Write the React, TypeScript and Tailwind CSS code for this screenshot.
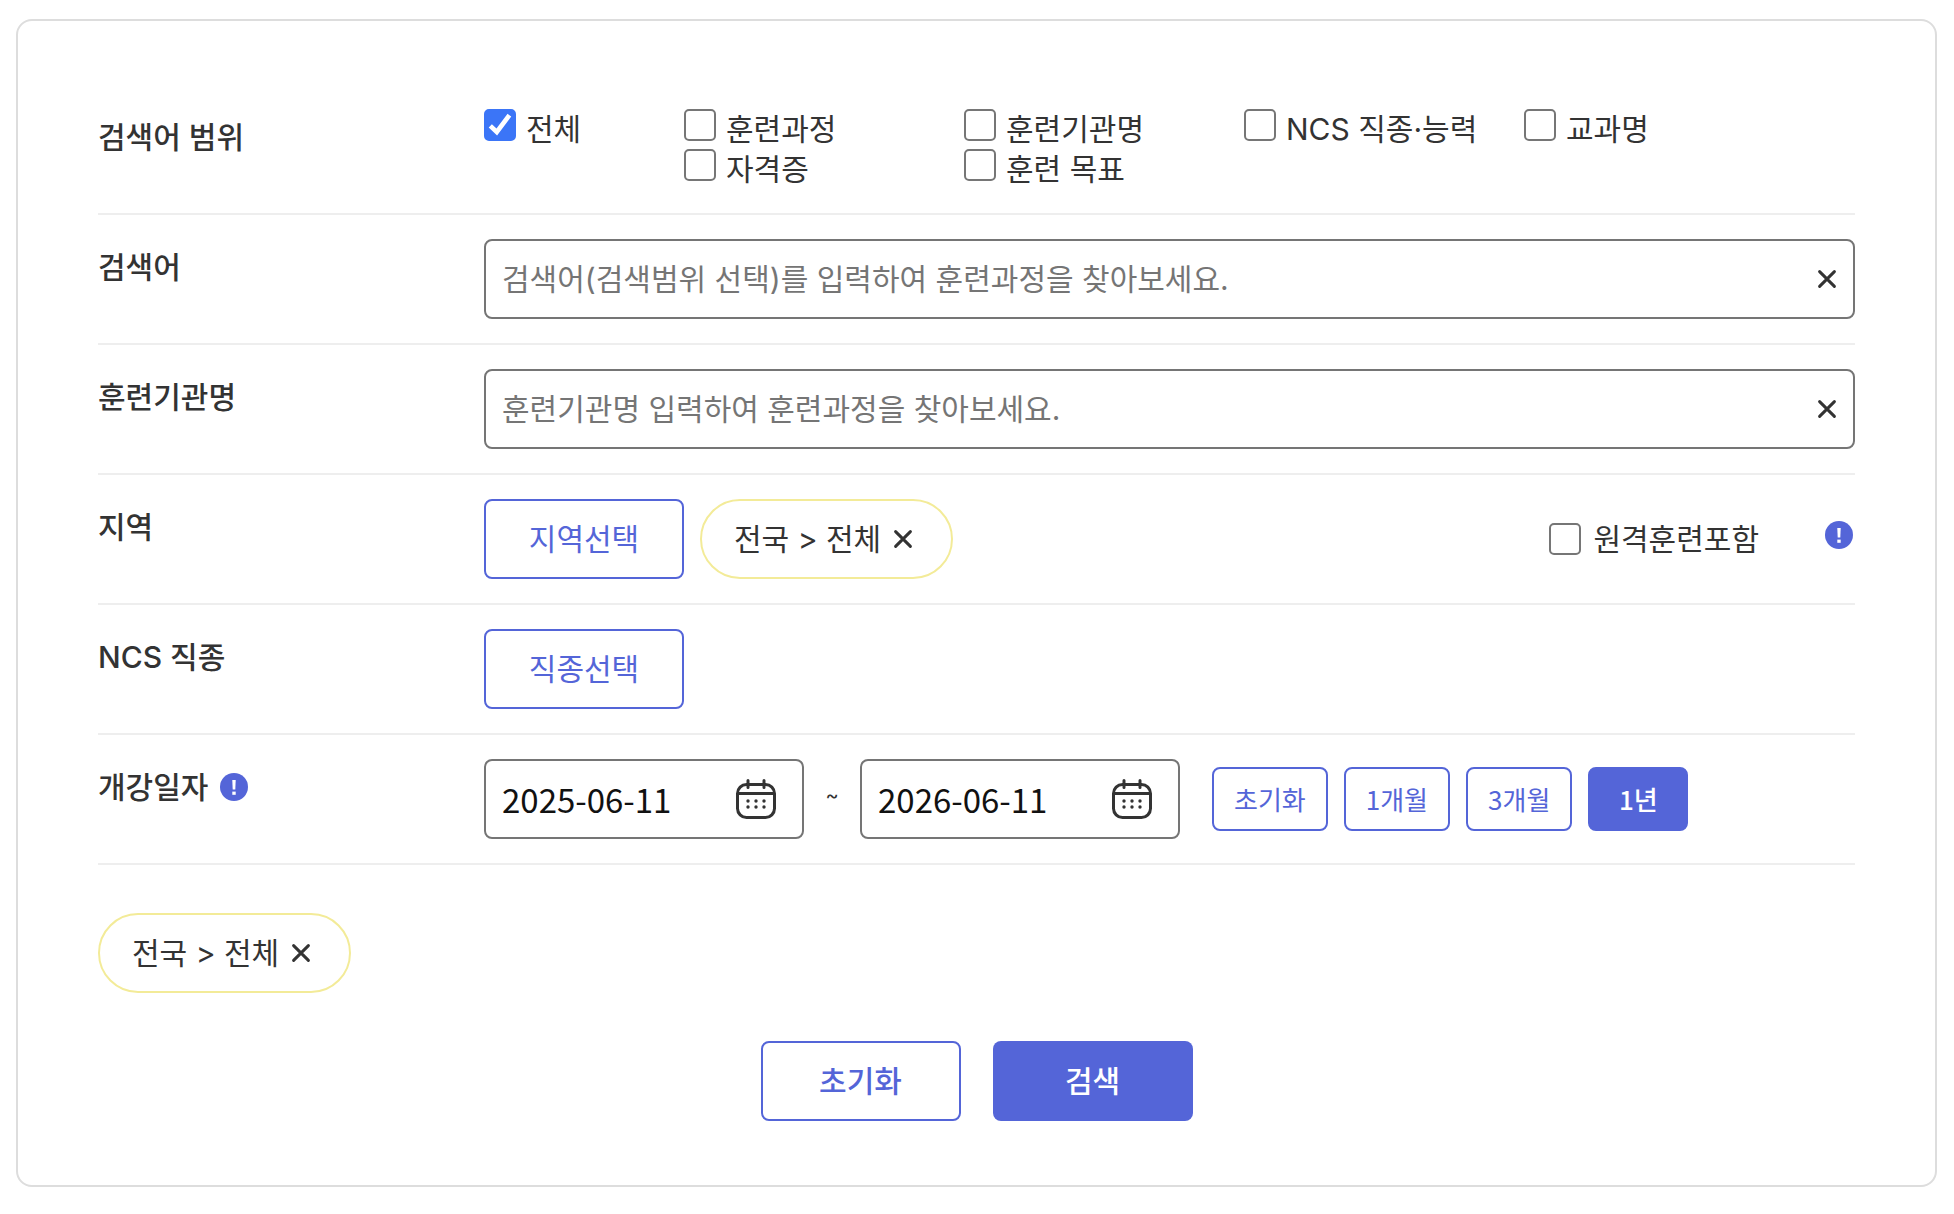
import { useState, type ReactNode } from "react";

const scopes = [
  { id: "all", label: "전체" },
  { id: "course", label: "훈련과정" },
  { id: "org", label: "훈련기관명" },
  { id: "ncs", label: "NCS 직종·능력" },
  { id: "subject", label: "교과명" },
  { id: "cert", label: "자격증", start: true },
  { id: "goal", label: "훈련 목표" },
];

const periods = ["초기화", "1개월", "3개월", "1년"];

function CloseIcon() {
  return (
    <svg className="size-5" viewBox="0 0 20 20" fill="none" stroke="#333333" strokeWidth="3" strokeLinecap="round">
      <path d="M2.6 2.6l14.8 14.8M17.4 2.6L2.6 17.4" />
    </svg>
  );
}

function CalendarIcon() {
  return (
    <svg className="size-10" viewBox="0 0 40 40" fill="none" stroke="#333333" strokeWidth="3" strokeLinecap="round">
      <rect x="1.5" y="5.5" width="37" height="33" rx="9" />
      <path d="M2 14.5h36" strokeLinecap="butt" />
      <path d="M12 1.5v7M28 1.5v7" />
      <g fill="#333333" stroke="none">
        <circle cx="12" cy="22" r="1.7" />
        <circle cx="20" cy="22" r="1.7" />
        <circle cx="28" cy="22" r="1.7" />
        <circle cx="12" cy="28" r="1.7" />
        <circle cx="20" cy="28" r="1.7" />
        <circle cx="28" cy="28" r="1.7" />
      </g>
    </svg>
  );
}

function InfoButton({ label }: { label: string }) {
  return (
    <button type="button" aria-label={label} className="shrink-0">
      <svg className="size-7" viewBox="0 0 28 28">
        <circle cx="14" cy="14" r="14" fill="#5465d8" />
        <path d="M12.3 7h3.4l-.4 9.5h-2.6z" fill="#fff" />
        <rect x="12.3" y="18.6" width="3.4" height="3.2" fill="#fff" />
      </svg>
    </button>
  );
}

function Checkbox({ id, defaultChecked }: { id: string; defaultChecked?: boolean }) {
  return (
    <span className="relative size-8 shrink-0">
      <input
        id={id}
        type="checkbox"
        defaultChecked={defaultChecked}
        className="peer block size-8 appearance-none rounded-[5px] border-2 border-[#767676] bg-white checked:border-[#3b75f7] checked:bg-[#3b75f7]"
      />
      <svg
        className="pointer-events-none absolute inset-0 hidden size-8 peer-checked:block"
        viewBox="0 0 32 32"
        fill="none"
        stroke="#fff"
        strokeWidth="4.6"
      >
        <path d="M6.3 16.8l6.5 6.2L25.4 6.2" />
      </svg>
    </span>
  );
}

function Row({ label, htmlFor, info, children }: { label: string; htmlFor?: string; info?: boolean; children: ReactNode }) {
  return (
    <div className="flex border-b-2 border-[#eeeeee] py-6">
      <div className="flex w-[386px] shrink-0 items-center gap-3 self-start pt-2 text-[30px] leading-10 font-medium">
        {htmlFor ? <label htmlFor={htmlFor}>{label}</label> : <span>{label}</span>}
        {info && <InfoButton label="개강일자 안내" />}
      </div>
      <div className="min-w-0 flex-1">{children}</div>
    </div>
  );
}

function SearchInput({ id, placeholder }: { id: string; placeholder: string }) {
  const [value, setValue] = useState("");
  return (
    <div className="flex h-20 items-center rounded-lg border-2 border-[#757575] px-4">
      <input
        id={id}
        type="text"
        value={value}
        onChange={(e) => setValue(e.target.value)}
        placeholder={placeholder}
        className="h-full min-w-0 flex-1 bg-transparent text-[30px] outline-none placeholder:text-[#757575]"
      />
      <button type="button" aria-label="지우기" onClick={() => setValue("")}>
        <CloseIcon />
      </button>
    </div>
  );
}

function DateInput({ label, defaultValue }: { label: string; defaultValue: string }) {
  return (
    <div className="flex h-20 w-80 items-center justify-between rounded-lg border-2 border-[#757575] pr-[26px] pl-4">
      <input
        type="text"
        aria-label={label}
        defaultValue={defaultValue}
        className="h-full w-[200px] bg-transparent font-['Noto_Sans_CJK_KR',sans-serif] text-[33px] text-[#111111] outline-none"
      />
      <button type="button" aria-label="달력 열기">
        <CalendarIcon />
      </button>
    </div>
  );
}

function Tag({ children }: { children: ReactNode }) {
  return (
    <span className="inline-flex h-20 items-center gap-3 rounded-full border-2 border-[#f3eb98] px-8">
      {children}
      <button type="button" aria-label="삭제" className="pr-1.5">
        <CloseIcon />
      </button>
    </span>
  );
}

export default function App() {
  const [period, setPeriod] = useState("1년");

  return (
    <main className="bg-white pt-[19px] pr-[17px] pb-[27px] pl-4 font-['Inter','Noto_Sans_CJK_KR',sans-serif] text-[30px] leading-10 text-[#333333]">
      <form className="rounded-2xl border-2 border-[#dddddd] px-20 py-16" onSubmit={(e) => e.preventDefault()}>
        <Row label="검색어 범위">
          <div className="grid grid-cols-[200px_repeat(3,280px)_1fr]">
            {scopes.map((scope) => (
              <div key={scope.id} className={scope.start ? "col-start-2 flex h-10 gap-2.5" : "flex h-10 gap-2.5"}>
                <Checkbox id={scope.id} defaultChecked={scope.id === "all"} />
                <label htmlFor={scope.id} className="whitespace-nowrap">
                  {scope.label}
                </label>
              </div>
            ))}
          </div>
        </Row>

        <Row label="검색어" htmlFor="keyword">
          <SearchInput id="keyword" placeholder="검색어(검색범위 선택)를 입력하여 훈련과정을 찾아보세요." />
        </Row>

        <Row label="훈련기관명" htmlFor="organization">
          <SearchInput id="organization" placeholder="훈련기관명 입력하여 훈련과정을 찾아보세요." />
        </Row>

        <Row label="지역">
          <div className="flex items-center gap-4">
            <button type="button" className="h-20 w-[200px] rounded-lg border-2 border-[#5465d8] text-[#5465d8]">
              지역선택
            </button>
            <Tag>전국 &gt; 전체</Tag>
            <div className="ml-auto flex items-center gap-3">
              <Checkbox id="remote" />
              <label htmlFor="remote">원격훈련포함</label>
              <span className="flex pr-0.5 pb-2 pl-[54px]">
                <InfoButton label="원격훈련 안내" />
              </span>
            </div>
          </div>
        </Row>

        <Row label="NCS 직종">
          <button type="button" className="h-20 w-[200px] rounded-lg border-2 border-[#5465d8] text-[#5465d8]">
            직종선택
          </button>
        </Row>

        <Row label="개강일자" info>
          <div className="flex items-center">
            <DateInput label="시작일" defaultValue="2025-06-11" />
            <span className="w-14 pb-2 text-center text-xl">~</span>
            <DateInput label="종료일" defaultValue="2026-06-11" />
            <div className="ml-8 flex gap-4 font-['Noto_Sans_CJK_KR',sans-serif]">
              {periods.map((p) => (
                <button
                  key={p}
                  type="button"
                  onClick={() => setPeriod(p)}
                  className={
                    p === period
                      ? "h-16 min-w-[100px] rounded-lg border-2 border-[#5465d8] bg-[#5465d8] px-5 text-[26px] font-medium text-white"
                      : "h-16 min-w-[100px] rounded-lg border-2 border-[#5465d8] px-5 text-[26px] text-[#5465d8]"
                  }
                >
                  {p}
                </button>
              ))}
            </div>
          </div>
        </Row>

        <div className="pt-12">
          <Tag>전국 &gt; 전체</Tag>
        </div>

        <div className="mt-12 flex justify-center gap-8">
          <button type="reset" className="h-20 w-[200px] rounded-lg border-2 border-[#5465d8] font-medium text-[#5465d8]">
            초기화
          </button>
          <button type="submit" className="h-20 w-[200px] rounded-lg bg-[#5465d8] font-medium text-white">
            검색
          </button>
        </div>
      </form>
    </main>
  );
}
